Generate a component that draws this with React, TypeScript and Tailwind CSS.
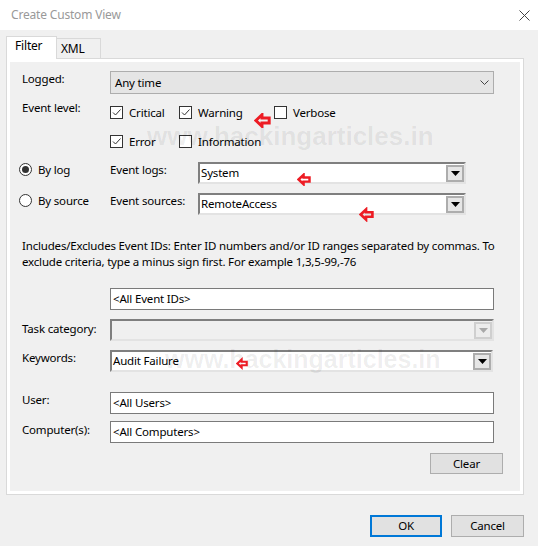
import React from "react";

const font = { fontFamily: '"Segoe UI", "Noto Sans", Arial, sans-serif' };

function Check({ checked, label }: { checked?: boolean; label: string }) {
  return (
    <div className="flex items-center gap-[6px] h-[13px]">
      <div className="w-[13px] h-[13px] border border-[#333333] bg-white flex items-center justify-center">
        {checked && (
          <svg width="11" height="11" viewBox="0 0 11 11">
            <path d="M2 5.5 L4.5 8 L9.5 2.5" fill="none" stroke="#333333" strokeWidth="1" />
          </svg>
        )}
      </div>
      <span className="leading-[16px] text-[#000000]">{label}</span>
    </div>
  );
}

function Radio({ checked }: { checked?: boolean }) {
  return (
    <div className="w-[13px] h-[13px] rounded-full border border-[#333333] bg-white flex items-center justify-center mt-[1px]">
      {checked && <div className="w-[7px] h-[7px] rounded-full bg-[#333333]" />}
    </div>
  );
}

function DropButton({ disabled }: { disabled?: boolean }) {
  return (
    <div
      className={`w-[18px] h-[17px] border-2 flex items-center justify-center ${
        disabled ? "border-[#cfcfcf] bg-[#ececec]" : "border-[#adadad] bg-[#e6e6e6]"
      }`}
    >
      <svg width="9" height="5" viewBox="0 0 9 5">
        <path d="M0 0 L9 0 L4.5 5 Z" fill={disabled ? "#a8a8a8" : "#000000"} />
      </svg>
    </div>
  );
}

function Combo({ width, text, disabled }: { width: string; text?: string; disabled?: boolean }) {
  return (
    <div
      className={`${width} h-[22px] border-2 border-t-[#7f7f7f] border-l-[#7f7f7f] border-r-[#e3e3e3] border-b-[#e3e3e3] flex items-center justify-between ${
        disabled ? "bg-[#f0f0f0]" : "bg-white"
      }`}
    >
      <span className="pl-[1px] leading-[16px]">{text}</span>
      <DropButton disabled={disabled} />
    </div>
  );
}

function TextBox({ text }: { text: string }) {
  return (
    <div className="w-[384px] h-[22px] border border-[#7a7a7a] bg-white flex items-center pl-[2px]">
      <span className="leading-[16px]">{text}</span>
    </div>
  );
}

function Arrow({ className, w, h }: { className: string; w: number; h: number }) {
  return (
    <svg className={`absolute z-30 ${className}`} width={w} height={h} viewBox="0 0 16 14">
      <path
        d="M1.8 7 L7.5 1.6 L7.5 4.6 L14.3 4.6 L14.3 9.4 L7.5 9.4 L7.5 12.4 Z"
        fill="none"
        stroke="#ed1c24"
        strokeWidth="2.8"
        strokeLinejoin="miter"
      />
    </svg>
  );
}

export default function App() {
  return (
    <div
      className="relative w-[538px] h-[546px] bg-[#f0f0f0] text-[11.5px] tracking-[-0.18px] text-black overflow-hidden"
      style={font}
    >
      {/* Title bar */}
      <div className="h-[30px] bg-white flex items-center justify-between pl-[11px] pr-[8px]">
        <span className="text-[12px] text-[#999999]">Create Custom View</span>
        <svg width="11" height="11" viewBox="0 0 11 11">
          <path d="M0.5 0.5 L10.5 10.5 M10.5 0.5 L0.5 10.5" stroke="#444444" strokeWidth="1" />
        </svg>
      </div>

      {/* Tabs */}
      <div className="flex items-start ml-[6px] mt-[6px]">
        <div className="relative z-10 w-[51px] h-[23px] -mb-[1px] bg-white border-t border-l border-r border-[#d9d9d9] pl-[8px] pt-[1px]">
          <span className="block leading-[16px] text-[12px]">Filter</span>
        </div>
        <div className="w-[44px] h-[20px] mt-[2px] bg-[#f0f0f0] border-t border-r border-[#d9d9d9] pl-[4px] pt-[2px]">
          <span className="block leading-[16px] text-[12px]">XML</span>
        </div>
      </div>

      {/* Panel */}
      <div className="ml-[6px] w-[518px] h-[437px] border border-[#d9d9d9] bg-white p-[3px]">
        <div className="h-full bg-[#f0f0f0] flex flex-col pl-[12px]">
          {/* Logged */}
          <div className="flex items-start mt-[9px]">
            <span className="w-[88px] leading-[16px]">Logged:</span>
            <div className="w-[384px] h-[23px] border border-[#adadad] bg-[#e5e5e5] flex items-center justify-between pl-[4px] pr-[4px]">
              <span className="leading-[16px]">Any time</span>
              <svg width="9" height="5" viewBox="0 0 9 5">
                <path d="M0.5 0.5 L4.5 4.5 L8.5 0.5" fill="none" stroke="#444444" strokeWidth="1" />
              </svg>
            </div>
          </div>

          {/* Event level */}
          <div className="flex items-start mt-[6px]">
            <span className="w-[88px] leading-[16px]">Event level:</span>
            <div className="grid grid-cols-[69px_95px_auto] gap-y-[16px] pt-[6px]">
              <Check checked label="Critical" />
              <Check checked label="Warning" />
              <Check label="Verbose" />
              <Check checked label="Error" />
              <Check label="Information" />
            </div>
          </div>

          {/* By log */}
          <div className="flex items-start mt-[14px] -ml-[3px]">
            <div className="w-[91px] flex items-start gap-[6px]">
              <Radio checked />
              <span className="leading-[16px]">By log</span>
            </div>
            <span className="w-[88px] leading-[16px]">Event logs:</span>
            <Combo width="w-[268px]" text="System" />
          </div>

          {/* By source */}
          <div className="flex items-start mt-[9px] -ml-[3px]">
            <div className="w-[91px] flex items-start gap-[6px]">
              <Radio />
              <span className="leading-[16px]">By source</span>
            </div>
            <span className="w-[88px] leading-[16px]">Event sources:</span>
            <Combo width="w-[268px]" text="RemoteAccess" />
          </div>

          {/* Description */}
          <p className="mt-[23px] leading-[15.5px] whitespace-nowrap">
            Includes/Excludes Event IDs: Enter ID numbers and/or ID ranges separated by commas. To
            <br />
            exclude criteria, type a minus sign first. For example 1,3,5-99,-76
          </p>

          {/* Event IDs */}
          <div className="flex items-start mt-[19px]">
            <span className="w-[88px]" />
            <TextBox text="<All Event IDs>" />
          </div>

          {/* Task category */}
          <div className="flex items-start mt-[9px]">
            <span className="w-[88px] leading-[16px] mt-[2px]">Task category:</span>
            <Combo width="w-[384px]" disabled />
          </div>

          {/* Keywords */}
          <div className="flex items-start mt-[9px]">
            <span className="w-[88px] leading-[16px]">Keywords:</span>
            <Combo width="w-[383px]" text="Audit Failure" />
          </div>

          {/* User */}
          <div className="flex items-start mt-[20px]">
            <span className="w-[88px] leading-[16px]">User:</span>
            <TextBox text="<All Users>" />
          </div>

          {/* Computer */}
          <div className="flex items-start mt-[7px]">
            <span className="w-[88px] leading-[16px] mt-[1px]">Computer(s):</span>
            <TextBox text="<All Computers>" />
          </div>

          {/* Clear */}
          <div className="mt-[10px] ml-[408px] w-[73px] h-[21px] border border-[#adadad] bg-[#e1e1e1] flex items-center justify-center">
            <span className="leading-[16px]">Clear</span>
          </div>
        </div>
      </div>

      {/* Bottom buttons */}
      <div className="flex justify-end gap-[9px] pr-[14px] mt-[20px]">
        <div className="w-[72px] h-[22px] border-2 border-[#0078d7] bg-[#e1e1e1] flex items-center justify-center">
          <span className="leading-[16px]">OK</span>
        </div>
        <div className="w-[73px] h-[22px] border border-[#adadad] bg-[#e1e1e1] flex items-center justify-center">
          <span className="leading-[16px]">Cancel</span>
        </div>
      </div>

      {/* Watermarks */}
      <div
        className="absolute z-20 left-[147px] top-[120px] text-[26px] font-bold leading-[32px] tracking-normal text-black/[0.07] whitespace-nowrap pointer-events-none"
        style={{ fontFamily: '"Liberation Sans", Arial, sans-serif' }}
      >
        www.hackingarticles.in
      </div>
      <div
        className="absolute z-20 left-[165px] top-[343px] text-[25px] font-bold leading-[32px] tracking-normal text-black/[0.07] whitespace-nowrap pointer-events-none"
        style={{ fontFamily: '"Liberation Sans", Arial, sans-serif' }}
      >
        www.hackingarticles.in
      </div>

      {/* Annotation arrows */}
      <Arrow className="left-[254px] top-[113px]" w={17} h={15} />
      <Arrow className="left-[297px] top-[173px]" w={14} h={13} />
      <Arrow className="left-[359px] top-[207px]" w={15} h={15} />
      <Arrow className="left-[236px] top-[356px]" w={12} h={15} />
    </div>
  );
}
